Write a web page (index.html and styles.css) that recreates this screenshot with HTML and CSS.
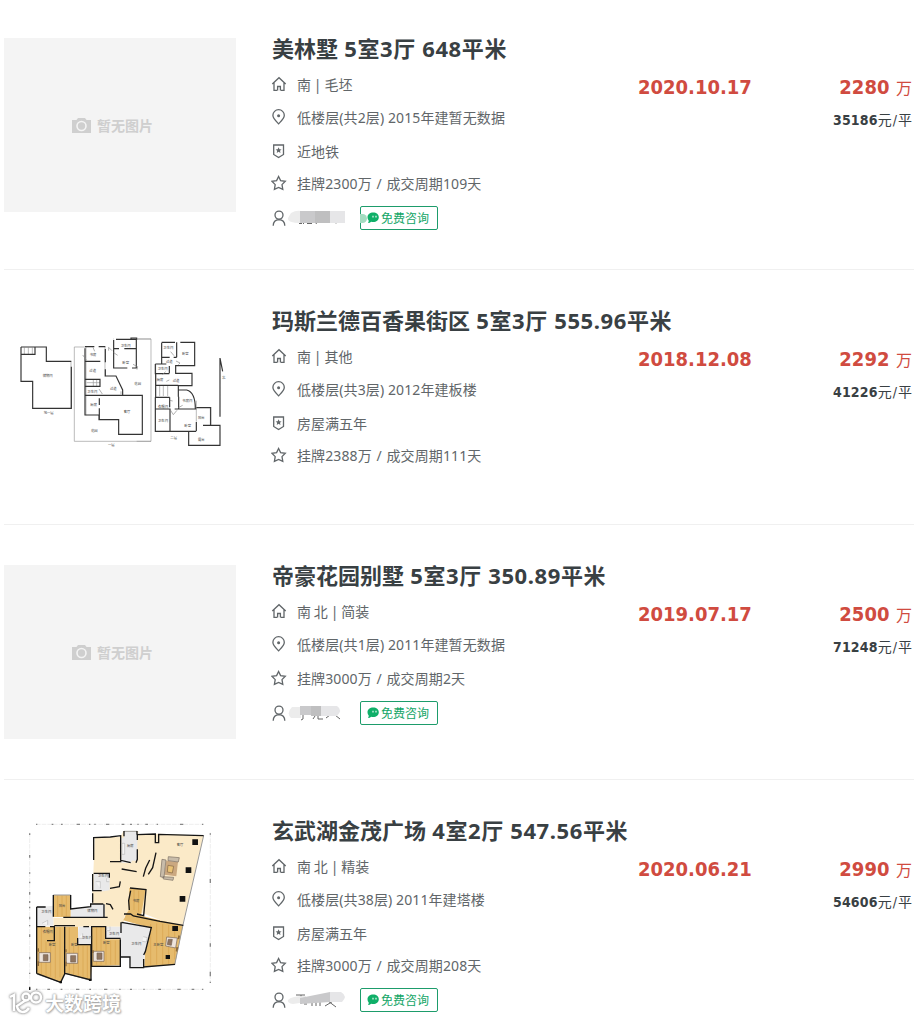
FILE: index.html
```html
<!DOCTYPE html>
<html lang="zh-CN">
<head>
  <meta charset="UTF-8" />
  <meta name="viewport" content="width=device-width, initial-scale=1.0"/>
  <title>成交房源</title>
  <link rel="stylesheet" href="styles.css">
</head>
<body>
  <svg class="sprite" width="0" height="0">
    <symbol id="i-house" viewBox="0 0 16 16"><path d="M1.3 8 8 1.7 14.7 8M3 6.7v7.6h3.2M13 6.7v7.6H9.8"/><path d="M6.6 14.5v-4h2.8v4"/></symbol>
    <symbol id="i-pin" viewBox="0 0 16 16"><path d="M7.6 14.8C5.2 12.3 1.9 9.6 1.9 6.3a5.7 5.6 0 0 1 11.4 0c0 3.3-3.3 6-5.7 8.5z"/><circle class="fill" cx="7.6" cy="6.8" r="1.5"/></symbol>
    <symbol id="i-badge" viewBox="0 0 16 16"><path d="M2.7 2h9.8v9.5l-4.9 3-4.9-3z"/><path class="fill" d="m7.6 4.3.9 1.9 2.1.2-1.6 1.4.5 2.1-1.9-1.1-1.9 1.1.5-2.1-1.6-1.4 2.1-.2z"/></symbol>
    <symbol id="i-star" viewBox="0 0 16 16"><path d="m7.6 1.5 2 4.1 4.7.7-3.3 3.3.8 4.7-4.2-1.9-4.2 1.9.8-4.7L.9 6.3l4.7-.7z"/></symbol>
    <symbol id="i-user" viewBox="0 0 16 16"><circle cx="8" cy="5.1" r="4"/><path d="M2.2 15.8c.1-3.8 2-6 5.8-6.1 3.8.1 5.7 2.3 5.8 6.1"/></symbol>
    <symbol id="i-chat" viewBox="0 0 12 12"><path class="green" d="M6.2.5c3.2 0 5.6 2 5.6 4.7 0 2.8-2.4 4.9-5.6 4.9-.7 0-1.4-.1-2-.3-.9.9-2.1 1.3-3.2 1.3.5-.7.8-1.6.7-2.7A4.6 4.6 0 0 1 .5 5.2C.5 2.5 3 .5 6.2.5z"/><path class="dots" d="M6 3.8v1.7M9 3.800v1.700"/></symbol>
    <symbol id="i-camera" viewBox="0 0 19 15"><path class="cam" d="M0 2h4.500L6 0h7l1.500 2H19v13H0z"/><circle class="lens" cx="9.500" cy="8" r="4.500"/></symbol>
  </svg>

  <ul class="list">
    <li class="item">
      <div class="thumb empty"><svg width="19" height="15"><use href="#i-camera"/></svg><span>暂无图片</span></div>
      <div class="info">
        <h2 class="title">美林墅<span> 5室3厅 648平米</span></h2>
        <div class="row facing"><svg class="icon"><use href="#i-house"/></svg>南 | 毛坯</div>
        <div class="row floor"><svg class="icon"><use href="#i-pin"/></svg>低楼层(共2层) 2015年建暂无数据</div>
        <div class="row tag"><svg class="icon"><use href="#i-badge"/></svg>近地铁</div>
        <div class="row deal"><svg class="icon"><use href="#i-star"/></svg>挂牌2300万 / 成交周期109天</div>
        <div class="agent">
          <svg class="icon"><use href="#i-user"/></svg>
          <svg class="masked" width="62" height="18">
            <path class="ink" d="M12 14.500h3m1 0h1m3 0h5m3-1 2 1m3-1h4m4 0h3m4 0 1 1m3-2 2 1"/>
            <path class="m1" d="M4 4q5-3 10-2v12Q0 14 1 9z"/><path class="m2" d="M13 2h15v12H13z"/><path class="m3" d="M28 2h15v12H28z"/><path class="m4" d="M43 2h15v12H43z"/>
          </svg>
          <a class="ask smudge"><svg width="12" height="12"><use href="#i-chat"/></svg>免费咨询</a>
        </div>
      </div>
      <div class="date">2020.10.17</div>
      <div class="price"><p class="total"><b>2280</b> 万</p><p class="unit"><b>35186</b>元<i>/</i>平</p></div>
    </li>

    <li class="item">
      <div class="thumb">
        <svg class="plan" viewBox="4 310 232 174">
          <g transform="translate(10 330) scale(.3333)">
            <path class="thin" d="M423 27H380M311 27h-2M423 334H193V51h32M183 95v140M228 51v205M250 148v22M260 148v22M285 50v90M43 53v20M55 53v20M67 53v20M230 158h40"/>
            <path class="wall" d="M33 51h76v43h75M184 110v125H68v-81H33V51M34 73h41V51M225 50h28M266 50h20M225 94h46M225 55v112M286 57v40M286 118v20h32l20 42v15M225 148h45v21h-45v86h42v14h59v44h71V196H225M268 205v20M268 235v34M311 30v84h41M379 27v87h-13M311 56h16M343 56h36M318 28h62V24h-17v4"/>
            <path class="door" d="m218 75 11 14M249 52l5 12M296 62v-10l10 10M311 68l12 8M369 103l14 7-2 9M267 177l10 15M333 184v9"/>
            <g class="rooms"><text x="98" y="142">储物间</text><text x="101" y="252">地一层</text><text x="239" y="79">书房</text><text x="238" y="126">过道</text><text x="332" y="50">卫生间</text><text x="337" y="102">卧室</text><text x="232" y="188">卫生间</text><text x="300" y="181">过道</text><text x="373" y="166">花园</text><text x="241" y="229">厨房</text><text x="341" y="250">客厅</text><text x="243" y="306">花园</text><text x="294" y="347">一层</text></g>
          </g>
          <g transform="translate(140 330) scale(.3333)">
            <path class="thin" d="M-10 27h43v307h-43M169 212v63M211 232v53M59 168v30M70 168v30M83 168v30M47 105v62"/>
            <path class="wall" d="M65 38v64h14M65 37h40M121 37h43v70h-57v23h49v37h-41v33M110 37v45M65 82h24M101 82h9M46 102v29h42M46 102h19M47 131v35h68M88 108v22M47 166v36h42M46 202v102h122M46 237h44v65M104 237h65M169 233h43v52M115 180h25q26 7 26 56M89 202v30M116 200v37M169 276v28M146 304v42h94v-60h-51M240 88v-4l8 40M240 86v174"/>
            <path class="door" d="m92 65 10 12M108 93l12 6-5 5M67 134l10-9M79 154l9-4M91 240l9 14 11-13M89 211l9 2M115 233l13-7"/>
            <g class="rooms"><text x="70" y="57">卫生间</text><text x="126" y="75">卧室</text><text x="78" y="98">过道</text><text x="53" y="119">卫生间</text><text x="50" y="153">厨房</text><text x="98" y="156">过道</text><text x="54" y="233">衣帽间</text><text x="54" y="277">卫生间</text><text x="127" y="216">书房间</text><text x="133" y="291">卧室</text><text x="174" y="266">阳台</text><text x="174" y="333">露台</text><text x="91" y="328">二层</text><text x="246" y="146">北</text></g>
          </g>
        </svg>
      </div>
      <div class="info">
        <h2 class="title">玛斯兰德百香果街区<span> 5室3厅 555.96平米</span></h2>
        <div class="row facing"><svg class="icon"><use href="#i-house"/></svg>南 | 其他</div>
        <div class="row floor"><svg class="icon"><use href="#i-pin"/></svg>低楼层(共3层) 2012年建板楼</div>
        <div class="row tag"><svg class="icon"><use href="#i-badge"/></svg>房屋满五年</div>
        <div class="row deal"><svg class="icon"><use href="#i-star"/></svg>挂牌2388万 / 成交周期111天</div>
      </div>
      <div class="date">2018.12.08</div>
      <div class="price"><p class="total"><b>2292</b> 万</p><p class="unit"><b>41226</b>元<i>/</i>平</p></div>
    </li>

    <li class="item">
      <div class="thumb empty"><svg width="19" height="15"><use href="#i-camera"/></svg><span>暂无图片</span></div>
      <div class="info">
        <h2 class="title">帝豪花园别墅<span> 5室3厅 350.89平米</span></h2>
        <div class="row facing"><svg class="icon"><use href="#i-house"/></svg>南 北 | 简装</div>
        <div class="row floor"><svg class="icon"><use href="#i-pin"/></svg>低楼层(共1层) 2011年建暂无数据</div>
        <div class="row deal"><svg class="icon"><use href="#i-star"/></svg>挂牌3000万 / 成交周期2天</div>
        <div class="agent">
          <svg class="icon"><use href="#i-user"/></svg>
          <svg class="masked" width="62" height="18">
            <path class="ink" d="M13 4h3m0 0v11l-2 1m14-4-2 3m5-3v3h5m3-1 4-3m5 0 5 4"/>
            <path class="m1" d="M5 3h9v11H4q-5-5 1-11z"/><path class="m2" d="M13 2h16v9H13z"/><path class="m3" d="M24 2h10v10H24z"/><path class="m4" d="M34 2h16q6 4 0 10H34z"/>
          </svg>
          <a class="ask"><svg width="12" height="12"><use href="#i-chat"/></svg>免费咨询</a>
        </div>
      </div>
      <div class="date">2019.07.17</div>
      <div class="price"><p class="total"><b>2500</b> 万</p><p class="unit"><b>71248</b>元<i>/</i>平</p></div>
    </li>

    <li class="item">
      <div class="thumb">
        <svg class="plan" viewBox="4 820 232 174">
          <g transform="translate(0 810) scale(.3333)">
            <path class="ruler" d="M108 43h502M108 538h502M89 68v470M631 68v450"/>
            <path class="ticks" d="M108 43h4M155 43h5M183 43h5M230 43h10M267 43h4M283 43h4M318 43h10M365 43h8M390 43h6M412 43h4M436 43h8M470 43h4M540 43h10M606 43h4M108 538h4M142 538h8M182 538h5M228 538h10M268 538h5M312 538h10M358 538h4M390 538h6M430 538h4M475 538h8M532 538h10M575 538h8M606 538h4M89 70v5M89 135v8M89 187v4M89 215v5M89 246v8M89 273v6M89 290v5M89 320v8M89 345v4M89 373v8M89 440v8M89 488v4M89 530v10M631 70v4M631 207v12M631 345v4M631 400v10M631 485v14M631 515v4"/>
            <path class="hall" d="M284 83l78-3 8-17h45v11l65-3 131 6-63 269-47-8-72-28-57 10v30H160v-27h155v-40h-38v-36l3-55z"/>
            <path class="tile" d="M364 83h8V65h40v87h-17v6h-31zM282 190h47v51l-22 3h-27zM212 298l60-8 2-8h38v39H212zM110 292l50-5v60h-50zM236 350h37v54h-40v-24zM316 350h46v36h-44zM363 337l90 16-20 80v38h-42v-30h-28z"/>
            <path class="wood" d="M160 255h52v66h-52zM110 350h84v142l-12 25-72-26zM195 350h39v54h41v73l-4 34-77-20zM276 350h40v38h46v78l-86 3zM388 234l49 4-14 79 126 30-24 117-92 7 2-40 19-76-84-24 7-15 9-15z"/>
            <path class="grain" d="M124 352v140M138 395v105M152 395v105M166 395v110M180 352v150M208 352v140M221 408v88M235 408v90M249 408v94M262 408v98M290 352v112M303 352v112M318 392v72M332 392v72M346 392v72M173 257v62M186 257v62M199 257v62M402 240v60M416 242v64M452 342v122M470 340v124M488 342v122M506 345v120M524 348v100"/>
            <path class="glass" d="M611 77 549 345l-25 120M110 492l72 25M194 489l76 22M160 255h52M372 64h39"/>
            <path class="wall2" d="M281 150V83l50-2 31-4v74l30 7M412 72v18M412 118v30l-4 10M372 79V63M411 63v11M411 74l55-2v26h10V73l135 4M278 192v50h27M281 190h47v13M330 235l28-5 3-16M365 177l45 8M330 155h34M468 128l-10 45-13 20M449 150l-12 25-7 25M160 320V255M212 255v42l60-7v-8h38M312 283v40M190 322h133M110 291h27M110 291v200M136 350H110M150 350h13v42h-22M163 347h62M194 350v142l-12 25-70-26M250 350h17M233 384v20h40v106l-78-20M273 350h44v35h45M275 350v119h86v-81M318 281l13 3 8 14M388 300l-2-28 6-30M390 234l48 5-7 78-20-5M372 312h20l8 6 80 16 70 12M363 337v32M365 337l89 16-18 72-5 10M361 441h29v32h43M431 447v24l94-8M278 250v28"/>
            <path class="post" d="M577 88h17v17h-17zM557 172h17v17h-17zM539 258h17v17h-17zM517 348h17v15h-17zM497 435h13v12h-13zM179 513h7v7h-7zM267 506h7v7h-7zM87 532h4v8h-4z"/>
            <path class="rug" d="m499 152 35 4-5 43-36-5z"/>
            <path class="sofa" d="m486 148 12 2-6 53-11-3zM505 140l33 3-3 13-31-4zM489 200l32 2-2 9-29-4z"/>
            <path class="table" d="m504 166 17 3-4 20-15-3z"/>
            <g class="bed"><path d="M117 428h34v29h-34zM199 430h34v30h-34zM280 424h32v30h-32zM500 381l32 3-5 30-30-6z"/><path class="duvet" d="M130 434h14v18h-14zM212 437h15v19h-15zM291 429h15v19h-15zM505 388h12l-3 18-12-2z"/></g>
            <path class="nightstand" d="M112 415h5v10h-5zM112 454h5v14h-5zM195 418h5v9h-5zM195 455h5v14h-5zM276 420h5v9h-5zM535 376l5 1-2 11-5-1zM529 411l6 1-3 13-5-1z"/>
            <path class="fixture" d="M126 340l17-9v14M287 215h14v20M248 370v15h-12M330 350v12h-11M430 380l12 3-3 13-12-2M366 100h8v33h-8zM320 205v10h8"/>
            <g class="rooms"><text x="530" y="108">客厅</text><text x="381" y="112">厨房</text><text x="294" y="202">卫生间</text><text x="176" y="292">阳台</text><text x="124" y="308">卫生间</text><text x="262" y="306">储物间</text><text x="398" y="276">书房</text><text x="128" y="370">衣帽间</text><text x="146" y="407">卧室</text><text x="213" y="409">卧室</text><text x="246" y="388">卫生间</text><text x="309" y="402">卧室</text><text x="327" y="374">卫生间</text><text x="394" y="404">卫生间</text><text x="460" y="407">主卧室</text></g>
          </g>
        </svg>
      </div>
      <div class="info">
        <h2 class="title">玄武湖金茂广场<span> 4室2厅 547.56平米</span></h2>
        <div class="row facing"><svg class="icon"><use href="#i-house"/></svg>南 北 | 精装</div>
        <div class="row floor"><svg class="icon"><use href="#i-pin"/></svg>低楼层(共38层) 2011年建塔楼</div>
        <div class="row tag"><svg class="icon"><use href="#i-badge"/></svg>房屋满五年</div>
        <div class="row deal"><svg class="icon"><use href="#i-star"/></svg>挂牌3000万 / 成交周期208天</div>
        <div class="agent">
          <svg class="icon"><use href="#i-user"/></svg>
          <svg class="masked" width="62" height="18">
            <path class="ink" d="M9 4h9m-4 0v9m3 0h3m5-1v3m4-4v4m4-4v4m5 0 10-6m-7 1 8 6"/>
            <path class="m1" d="M1 9q3-4 18-4v6L6 13q-6-1-5-4z"/><path class="m2" d="m13 7 30-6v10l-30 2z"/><path class="m4" d="M43 1h11q7 4 1 10H43z"/>
          </svg>
          <a class="ask"><svg width="12" height="12"><use href="#i-chat"/></svg>免费咨询</a>
        </div>
      </div>
      <div class="date">2020.06.21</div>
      <div class="price"><p class="total"><b>2990</b> 万</p><p class="unit"><b>54606</b>元<i>/</i>平</p></div>
    </li>
  </ul>

  <div class="watermark">
    <svg width="36" height="26" viewBox="0 0 36 26"><path d="M2 6l4-2v16M18 9l-9 6c1 7 8 8 12 2"/><circle cx="18" cy="6" r="3.500"/><circle cx="28" cy="6.500" r="5"/></svg>
    <span>大数跨境</span>
  </div>
</body>
</html>
```
FILE: styles.css
```css
* {
  box-sizing: border-box;
  margin: 0;
  padding: 0;
}

body {
  height: 1021px;
  overflow: hidden;
  background: #fff;
  color: #616669;
  font-family: "Noto Sans", "Noto Sans CJK SC", sans-serif;
  font-size: 14px;
}

.sprite {
  display: block;
}

.list {
  list-style: none;
  padding: 0 6px 0 4px;
}

.item {
  display: flex;
  align-items: flex-start;
  padding: 40px 0;
  border-bottom: 1px solid #f0f0f0;
}

.item:first-child {
  padding-top: 38px;
}

.thumb {
  width: 232px;
  height: 174px;
  margin-right: 35px;
  flex-shrink: 0;
}

.empty {
  display: flex;
  align-items: center;
  justify-content: center;
  gap: 6px;
  padding-right: 15px;
  background: #f4f4f4;
  color: #cfcfcf;
  font-weight: bold;
}

.cam { fill: #cfcfcf; }
.lens { fill: none; stroke: #f4f4f4; stroke-width: 1.6; }

.info {
  width: 367px;
  flex-shrink: 0;
}

.title {
  height: 29px;
  padding-left: 1px;
  line-height: 21px;
  color: #394043;
  font-size: 22px;
  font-weight: bold;
  white-space: pre;
}

.title span {
  letter-spacing: 0.6px;
}

.row {
  display: flex;
  align-items: center;
  height: 33px;
  white-space: pre;
}

.row.facing {
  word-spacing: -0.8px;
}

.row.floor {
  margin-bottom: 2px;
  letter-spacing: 0.1px;
}

.row.tag {
  height: 32px;
}

.row.deal {
  padding-bottom: 2px;
  letter-spacing: 0.1px;
  word-spacing: 1px;
}

.icon {
  width: 16px;
  height: 16px;
  margin-right: 10px;
  flex-shrink: 0;
  fill: none;
  stroke: #616669;
  stroke-width: 1.3;
}

.fill { fill: #616669; stroke: none; }

.agent {
  display: flex;
  align-items: center;
  height: 23px;
  margin-top: 6px;
}

.agent .icon {
  margin-right: 0;
}

.masked {
  margin-right: 11px;
}

.ink { fill: none; stroke: #666; stroke-width: 1; }
.m1 { fill: #ececec; }
.m2 { fill: #c9c9cb; }
.m3 { fill: #bfbfc0; }
.m4 { fill: #e6e6e8; }

.ask {
  position: relative;
  display: flex;
  align-items: center;
  gap: 2px;
  width: 78px;
  height: 24px;
  flex-shrink: 0;
  padding-left: 6px;
  border: 1px solid #1d9c6b;
  border-radius: 2px;
  color: #12a566;
  font-size: 12px;
}

.smudge::before {
  content: "";
  position: absolute;
  left: -1px;
  top: 7px;
  width: 7px;
  height: 9px;
  border-radius: 0 5px 5px 0;
  background: #a3dcc0;
}

.green { fill: #0faf68; }
.dots { stroke: #fff; stroke-width: 1.1; }

.date, .price {
  color: #d04b40;
  font-family: "DejaVu Sans Condensed", "DejaVu Sans", "Noto Sans CJK SC", sans-serif;
  font-stretch: condensed;
}

.date {
  padding-top: 37px;
  line-height: 24px;
  font-size: 20px;
  font-weight: bold;
}

.price {
  margin-left: auto;
  padding: 37px 2px 0 0;
  text-align: right;
}

.total {
  font-size: 16px;
  line-height: 24px;
  word-spacing: 2px;
}

.total b {
  font-size: 20px;
}

.unit {
  margin-top: 7px;
  line-height: 24px;
  color: #394043;
}

.unit b {
  letter-spacing: 0.2px;
}

.unit i {
  padding: 0 1px;
  font-style: normal;
}

/* floor plans */
.plan {
  display: block;
  width: 232px;
  height: 174px;
}

.plan path { fill: none; }
.plan .thin { stroke: #999; stroke-width: 2; }
.plan .wall { stroke: #333; stroke-width: 3.5; }
.plan .door { stroke: #888; stroke-width: 2; }
.plan .wall2 { stroke: #151515; stroke-width: 4; }
.plan .ruler { stroke: #ccc; stroke-width: 1; stroke-dasharray: 14 3; }
.plan .ticks { stroke: #888; stroke-width: 4; }
.plan .hall { fill: #fbeac8; }
.plan .tile { fill: #e9e9ea; }
.plan .wood { fill: #e6bb6d; }
.plan .grain { stroke: #dcab58; stroke-width: 3; }
.plan .glass { stroke: #999; stroke-width: 3; }
.plan .post { fill: #111; }
.plan .sofa { fill: #c8bcaa; stroke: #776b60; stroke-width: 2; }
.plan .rug { fill: #cba880; }
.plan .table { fill: #eac377; stroke: #806343; stroke-width: 2; }
.plan .bed path { fill: #eee4dc; stroke: #756456; stroke-width: 2; }
.plan .bed .duvet { fill: #90755f; }
.plan .nightstand { fill: #8c6a3c; }
.plan .fixture { stroke: #aaa; stroke-width: 1.5; fill: #f5f5f5; }
.rooms { fill: #444; font-size: 10px; }

.watermark {
  position: absolute;
  left: 8px;
  top: 990px;
  display: flex;
  align-items: center;
  gap: 1px;
  color: #fff;
  font-size: 19px;
  font-weight: bold;
  line-height: 28px;
  text-shadow: 0 0 2px #999, 0 0 2px #aaa, 1px 1px 2px #bbb;
}

.watermark svg {
  fill: none;
  stroke: #fff;
  stroke-width: 2.5;
  filter: drop-shadow(0 0 1px #888) drop-shadow(0 0 1px #bbb);
}
```
